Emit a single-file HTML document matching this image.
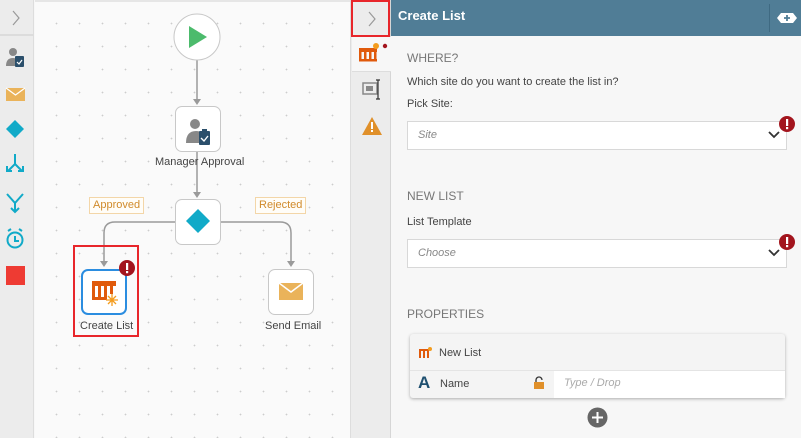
<!DOCTYPE html>
<html><head><style>
*{margin:0;padding:0;box-sizing:border-box}
body{width:801px;height:438px;overflow:hidden;font-family:"Liberation Sans",sans-serif;background:#f7f7f7;position:relative}
.a{position:absolute}
.lbl{font-size:11px;color:#444;position:absolute;white-space:nowrap}
.node{position:absolute;width:46px;height:46px;background:#fff;border:1px solid #c8c8c8;border-radius:7px}
.tag{position:absolute;font-size:11px;color:#d08a2a;border:1px solid #f3d6a8;background:#fffdf8;padding:1px 3px;line-height:13px}
.sel{position:absolute;left:407px;width:380px;height:29px;background:#fff;border:1px solid #d8d8d8}
.sel i{position:absolute;left:10px;top:7px;font-size:11px;color:#888}
.h{position:absolute;left:407px;font-size:12px;color:#777}
.t{position:absolute;left:407px;font-size:11px;color:#444}
</style></head><body>
<!-- left toolbar -->
<div class="a" style="left:0;top:0;width:34px;height:438px;background:#ececec;border-right:1px solid #ddd"></div>
<div class="a" style="left:0;top:34px;width:34px;height:2px;background:#dcdcdc"></div>
<svg class="a" style="left:0;top:0" width="34" height="300">
<path d="M13 11l6 7-6 7" fill="none" stroke="#999" stroke-width="1.2"/>
<circle cx="13" cy="52" r="4" fill="#888"/><path d="M6 66q0-8 7-8q5 0 6 4v4z" fill="#888"/><rect x="15" y="56" width="9" height="11" rx="1" fill="#2b4f6b"/><path d="M17 62l2 2 3-4" stroke="#fff" fill="none" stroke-width="1.2"/>
<rect x="6" y="88" width="19" height="13" fill="#eab35a"/><path d="M6 88l9.5 7 9.5-7" stroke="#fff" fill="none" stroke-width="1.3"/>
<path d="M15 120l9 9-9 9-9-9z" fill="#11aac8"/>
<path d="M15 154v10M15 164l-7 7M15 164l7 7M7 166v5h5M23 166v5h-5" stroke="#11aac8" fill="none" stroke-width="2"/>
<path d="M7 194l8 9 8-9M15 203v8M11 208l4 4 4-4" stroke="#11aac8" fill="none" stroke-width="2"/>
<circle cx="15" cy="240" r="7.5" stroke="#11aac8" fill="none" stroke-width="2"/><path d="M15 236v5h4M8 231l3-2M22 231l-3-2" stroke="#11aac8" fill="none" stroke-width="2"/>
<rect x="6" y="266" width="19" height="19" fill="#ee3b33"/>
</svg>
<!-- canvas -->
<div class="a" style="left:35px;top:0;width:316px;height:438px;background-color:#fafafa;background-image:radial-gradient(#ccc 0.7px,transparent 1px);background-size:23px 23px;background-position:10px 10px;border-top:2px solid #e6e6e6"></div>
<div class="a" style="left:350px;top:0;width:1px;height:438px;background:#ddd"></div>
<svg class="a" style="left:35px;top:0" width="316" height="438">
<g stroke="#9a9a9a" stroke-width="1.5" fill="none">
<path d="M162 60v42M162 151v44M140 222H80q-11 0-11 11v30M185 222h60q11 0 11 11v30"/>
</g>
<g fill="#9a9a9a"><path d="M158 99h8l-4 6z"/><path d="M158 192h8l-4 6z"/><path d="M65 261h8l-4 6z"/><path d="M252 261h8l-4 6z"/></g>
<circle cx="162" cy="37" r="23" fill="#fff" stroke="#c8c8c8"/>
<path d="M154 26v22l18-11z" fill="#4cbb6c"/>
</svg>
<div class="node" style="left:175px;top:106px"></div>
<svg class="a" style="left:175px;top:106px" width="46" height="46"><circle cx="20" cy="18" r="5" fill="#888"/><path d="M11 37q0-12 10-12q7 0 8 5v7z" fill="#888"/><rect x="24" y="25" width="11" height="14" rx="1" fill="#2b4f6b"/><rect x="27" y="23" width="5" height="3" fill="#2b4f6b"/><path d="M26 32l3 3 4-5" stroke="#fff" fill="none" stroke-width="1.4"/></svg>
<div class="lbl" style="left:155px;top:156px">Manager Approval</div>
<div class="node" style="left:175px;top:199px"></div>
<svg class="a" style="left:175px;top:199px" width="46" height="46"><path d="M23 10l12 12-12 12-12-12z" fill="#11aac8"/></svg>
<div class="tag" style="left:89px;top:197px">Approved</div>
<div class="tag" style="left:255px;top:197px">Rejected</div>
<div class="a" style="left:73px;top:245px;width:66px;height:92px;border:2px solid #e8262b"></div>
<div class="node" style="left:81px;top:269px;border:2px solid #2b8de0"></div>
<svg class="a" style="left:81px;top:269px" width="46" height="46"><rect x="11" y="12" width="24" height="5" fill="#e05a0c"/><rect x="11" y="17" width="3" height="12" fill="#e05a0c"/><rect x="17" y="17" width="3" height="12" fill="#e05a0c"/><rect x="23" y="17" width="3" height="12" fill="#e05a0c"/><rect x="29" y="17" width="3" height="8" fill="#e05a0c"/><rect x="11" y="28" width="15" height="3" fill="#e05a0c"/><g stroke="#f39c1e" stroke-width="1.3"><path d="M31 25v12M25 31h12M27 27l8 8M35 27l-8 8"/></g></svg>
<svg class="a" style="left:118px;top:259px" width="18" height="18"><circle cx="9" cy="9" r="8" fill="#a3151e"/><rect x="8" y="4" width="2.2" height="7" fill="#fff"/><rect x="8" y="12" width="2.2" height="2.2" fill="#fff"/></svg>
<div class="lbl" style="left:80px;top:320px">Create List</div>
<div class="node" style="left:268px;top:269px"></div>
<svg class="a" style="left:268px;top:269px" width="46" height="46"><rect x="11" y="14" width="24" height="17" fill="#eab35a"/><path d="M11 14l12 9 12-9" stroke="#fff" fill="none" stroke-width="1.5"/></svg>
<div class="lbl" style="left:265px;top:320px">Send Email</div>
<!-- right panel -->
<div class="a" style="left:351px;top:0;width:40px;height:438px;background:#ececec;border-right:1px solid #d6d6d6"></div>
<div class="a" style="left:352px;top:36px;width:39px;height:36px;background:#f7f7f7;border-top:1px solid #ddd;border-bottom:1px solid #ddd"></div>
<div class="a" style="left:351px;top:0;width:39px;height:37px;border:2px solid #e8262b;background:#ececec"></div>
<svg class="a" style="left:351px;top:0" width="40" height="150">
<path d="M18 12l6 7-6 7" fill="none" stroke="#999" stroke-width="1.2"/>
<rect x="8" y="48" width="18" height="4" fill="#e05a0c"/><rect x="8" y="52" width="2.5" height="9" fill="#e05a0c"/><rect x="13" y="52" width="2.5" height="9" fill="#e05a0c"/><rect x="18" y="52" width="2.5" height="9" fill="#e05a0c"/><rect x="23" y="52" width="2.5" height="9" fill="#e05a0c"/><rect x="8" y="59" width="18" height="2.5" fill="#e05a0c"/><circle cx="25" cy="46" r="3" fill="#f39c1e"/><circle cx="34" cy="46" r="2.2" fill="#a3151e"/>
<rect x="12" y="83" width="14" height="11" fill="none" stroke="#888" stroke-width="1.5"/><rect x="15" y="86" width="7" height="5" fill="#888"/><path d="M27 80v19M25 80h4M25 99h4" stroke="#333" stroke-width="1.2"/>
<path d="M21 117l10 18H11z" fill="#e0902a"/><rect x="20" y="122" width="2" height="7" fill="#fff"/><rect x="20" y="130" width="2" height="2" fill="#fff"/>
</svg>
<div class="a" style="left:391px;top:0;width:410px;height:36px;background:#507d96"></div>
<div class="a" style="left:398px;top:8px;font-size:13px;font-weight:bold;color:#fff">Create List</div>
<div class="a" style="left:769px;top:4px;width:1px;height:28px;background:#3f6a82"></div>
<svg class="a" style="left:776px;top:10px" width="22" height="16"><path d="M5 3h12l4 5-4 5H5L1 8z" fill="#fff"/><path d="M11 5v6M8 8h6" stroke="#507d96" stroke-width="1.8"/></svg>
<div class="h" style="top:51px">WHERE?</div>
<div class="t" style="top:76px">Which site do you want to create the list in?</div>
<div class="t" style="top:98px">Pick Site:</div>
<div class="sel" style="top:121px"><i>Site</i></div>
<svg class="a" style="left:768px;top:131px" width="12" height="8"><path d="M1 1l5 5 5-5" stroke="#333" fill="none" stroke-width="1.8"/></svg>
<svg class="a" style="left:778px;top:115px" width="18" height="18"><circle cx="9" cy="9" r="8" fill="#a3151e"/><rect x="8" y="4" width="2.2" height="7" fill="#fff"/><rect x="8" y="12" width="2.2" height="2.2" fill="#fff"/></svg>
<div class="h" style="top:189px">NEW LIST</div>
<div class="t" style="top:216px">List Template</div>
<div class="sel" style="top:239px"><i>Choose</i></div>
<svg class="a" style="left:768px;top:249px" width="12" height="8"><path d="M1 1l5 5 5-5" stroke="#333" fill="none" stroke-width="1.8"/></svg>
<svg class="a" style="left:778px;top:233px" width="18" height="18"><circle cx="9" cy="9" r="8" fill="#a3151e"/><rect x="8" y="4" width="2.2" height="7" fill="#fff"/><rect x="8" y="12" width="2.2" height="2.2" fill="#fff"/></svg>
<div class="h" style="top:307px">PROPERTIES</div>
<div class="a" style="left:410px;top:334px;width:375px;height:64px;background:#f4f4f4;border-radius:3px;box-shadow:0 1px 3px rgba(0,0,0,.3)"></div>
<div class="a" style="left:410px;top:370px;width:375px;height:1px;background:#e4e4e4"></div>
<div class="a" style="left:554px;top:371px;width:231px;height:27px;background:#fff"></div>
<svg class="a" style="left:418px;top:346px" width="14" height="14"><rect x="1" y="3" width="10" height="2" fill="#e05a0c"/><rect x="1" y="5" width="2" height="7" fill="#e05a0c"/><rect x="5" y="5" width="2" height="7" fill="#e05a0c"/><rect x="9" y="5" width="2" height="7" fill="#e05a0c"/><circle cx="12" cy="3" r="2" fill="#f39c1e"/></svg>
<div class="t" style="left:439px;top:347px">New List</div>
<div class="a" style="left:418px;top:373px;font-size:17px;font-weight:bold;color:#1f5070">A</div>
<div class="t" style="left:440px;top:378px">Name</div>
<svg class="a" style="left:533px;top:376px" width="12" height="14"><path d="M3 6V4a3 3 0 0 1 6 0" stroke="#333" fill="none" stroke-width="1.3"/><rect x="1" y="6" width="10" height="7" fill="#e0902a"/></svg>
<div class="a" style="left:564px;top:377px;font-size:11px;color:#aaa;font-style:italic">Type / Drop</div>
<svg class="a" style="left:587px;top:407px" width="21" height="21"><circle cx="10.5" cy="10.5" r="10" fill="#666"/><path d="M10.5 5v11M5 10.5h11" stroke="#fff" stroke-width="2"/></svg>
</body></html>
